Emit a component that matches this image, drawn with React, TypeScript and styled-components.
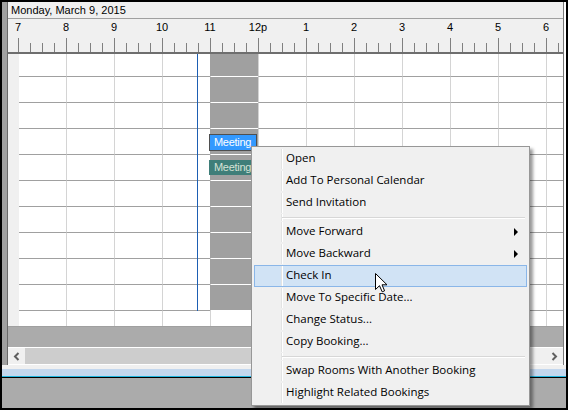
import React from "react";
import styled, { createGlobalStyle } from "styled-components";

const GlobalStyle = createGlobalStyle`
  html, body {
    margin: 0;
    padding: 0;
    background: #fff;
  }
  body {
    overflow: hidden;
  }
`;

const HOURS = ["7", "8", "9", "10", "11", "12p", "1", "2", "3", "4", "5", "6"];
const BUSY_COL = 4;
const NOW_X = 189;

interface RowSpec {
  height: number;
  meeting?: "blue" | "teal";
}

const ROWS: RowSpec[] = [
  { height: 23 },
  { height: 26 },
  { height: 26 },
  { height: 26, meeting: "blue" },
  { height: 26, meeting: "teal" },
  { height: 26 },
  { height: 26 },
  { height: 26 },
  { height: 26 },
  { height: 26 },
];

type MenuEntry = { label: string; sub?: boolean; hot?: boolean } | "sep";

const MENU: MenuEntry[] = [
  { label: "Open" },
  { label: "Add To Personal Calendar" },
  { label: "Send Invitation" },
  "sep",
  { label: "Move Forward", sub: true },
  { label: "Move Backward", sub: true },
  { label: "Check In", hot: true },
  { label: "Move To Specific Date..." },
  { label: "Change Status..." },
  { label: "Copy Booking..." },
  "sep",
  { label: "Swap Rooms With Another Booking" },
  { label: "Highlight Related Bookings" },
];

const App: React.FC = () => {
  return (
    <>
      <GlobalStyle />
      <Window>
        <Main>
          <SideStrip />
          <Content>
            <DateBar>Monday, March 9, 2015</DateBar>
            <Ruler>
              {HOURS.map((h) => (
                <HourMark key={h}>
                  <HourLabel>{h}</HourLabel>
                  <Ticks>
                    <Tick $major />
                    <Tick />
                    <Tick />
                    <Tick />
                  </Ticks>
                </HourMark>
              ))}
            </Ruler>
            <Grid>
              <RowsBody>
                {ROWS.map((row, r) => (
                  <Row key={r} $h={row.height}>
                    <RowHead />
                    <Track>
                      {HOURS.map((h, c) => (
                        <Cell key={h} $first={c === 0} $busy={c === BUSY_COL} $line>
                          {c === BUSY_COL && row.meeting && (
                            <Meeting $tone={row.meeting}>Meeting</Meeting>
                          )}
                        </Cell>
                      ))}
                    </Track>
                  </Row>
                ))}
                <NowLine style={{ left: NOW_X }} />
              </RowsBody>
              <Row $h={15}>
                <RowHead />
                <Track>
                  {HOURS.map((h, c) => (
                    <Cell key={h} $first={c === 0} />
                  ))}
                </Track>
              </Row>
            </Grid>
            <SplitGap />
            <HScroll>
              <ScrollBtn>
                <Chevron dir="left" />
              </ScrollBtn>
              <ScrollTrack>
                <Thumb />
              </ScrollTrack>
              <ScrollBtn>
                <Chevron dir="right" />
              </ScrollBtn>
            </HScroll>
          </Content>
        </Main>
        <LightBand />
        <SelBand />
        <DarkRule />
        <BottomPane />

        <Menu>
          {MENU.map((m, i) =>
            m === "sep" ? (
              <Separator key={i}>
                <Gutter />
                <SepLine />
              </Separator>
            ) : (
              <Item key={i} $hot={m.hot}>
                <Gutter />
                <ItemLabel>{m.label}</ItemLabel>
                {m.sub && <SubArrow />}
              </Item>
            )
          )}
        </Menu>
        <Cursor viewBox="0 0 13 20">
          <path
            d="M0.5 0.5 L0.5 16.5 L4.5 12.7 L7.2 18.8 L9.6 17.8 L7 11.8 L12 11.8 Z"
            fill="#fff"
            stroke="#000"
            strokeWidth="1"
            strokeLinejoin="miter"
          />
        </Cursor>
      </Window>
    </>
  );
};

const Chevron: React.FC<{ dir: "left" | "right" }> = ({ dir }) => (
  <ChevronSvg viewBox="0 0 7 9">
    <path
      d={dir === "left" ? "M5.5 1 L2 4.5 L5.5 8" : "M1.5 1 L5 4.5 L1.5 8"}
      fill="none"
      stroke="#606060"
      strokeWidth="2"
    />
  </ChevronSvg>
);

const Window = styled.div`
  position: relative;
  width: 568px;
  height: 410px;
  box-sizing: border-box;
  border: 2px solid #000;
  display: flex;
  flex-direction: column;
  font-family: "Liberation Sans", Arial, sans-serif;
  font-size: 11px;
  color: #000;
  background: #ababab;
  overflow: hidden;
`;

const Main = styled.div`
  display: flex;
  height: 363px;
  flex-shrink: 0;
  background: #fff;
`;

const SideStrip = styled.div`
  width: 5px;
  flex-shrink: 0;
  background: #a0a0a0;
  border-right: 1px solid #696969;
`;

const Content = styled.div`
  flex: 1;
  min-width: 0;
  display: flex;
  flex-direction: column;
  margin-right: 2px;
  background: #f0f0f0;
  border-right: 1px solid #7a7a7a;
  overflow: hidden;
`;

const DateBar = styled.div`
  height: 16px;
  line-height: 16px;
  padding-left: 3px;
  border-bottom: 1px solid #a0a0a0;
  white-space: nowrap;
`;

const Ruler = styled.div`
  height: 33px;
  flex-shrink: 0;
  display: flex;
  padding-left: 10px;
  border-bottom: 2px solid #6e6e6e;
  overflow: hidden;
`;

const HourMark = styled.div`
  flex: 0 0 48px;
  display: flex;
  flex-direction: column;
  justify-content: space-between;
`;

const HourLabel = styled.div`
  width: 48px;
  margin-left: -24px;
  text-align: center;
  line-height: 16px;
`;

const Ticks = styled.div`
  display: flex;
  align-items: flex-end;
  height: 14px;
`;

const Tick = styled.span<{ $major?: boolean }>`
  flex: 0 0 12px;
  box-sizing: border-box;
  height: ${({ $major }) => ($major ? 14 : 9)}px;
  border-left: 1px solid #808080;
`;

const Grid = styled.div`
  display: flex;
  flex-direction: column;
`;

const RowsBody = styled.div`
  position: relative;
`;

const Row = styled.div<{ $h: number }>`
  display: flex;
  height: ${({ $h }) => $h}px;
  overflow: hidden;
`;

const RowHead = styled.div`
  flex: 0 0 11px;
  background: #f0f0f0;
`;

const Track = styled.div`
  flex: none;
  display: grid;
  grid-template-columns: 47px repeat(11, 48px);
  background: #fff;
`;

const Cell = styled.div<{ $first?: boolean; $busy?: boolean; $line?: boolean }>`
  box-sizing: border-box;
  display: flex;
  align-items: flex-start;
  background: ${({ $busy }) => ($busy ? "#a0a0a0" : "#fff")};
  border-left: ${({ $first, $busy }) =>
    $first ? "none" : `1px solid ${$busy ? "#a0a0a0" : "#d4d4d4"}`};
  border-bottom: ${({ $line, $busy }) =>
    $line ? `1px solid ${$busy ? "#fff" : "#a0a0a0"}` : "none"};
`;

const Meeting = styled.div<{ $tone: "blue" | "teal" }>`
  flex: none;
  box-sizing: border-box;
  width: 48px;
  height: ${({ $tone }) => ($tone === "blue" ? 17 : 15)}px;
  margin: 5px 0 0 -2px;
  padding-left: 4px;
  border: 1px solid ${({ $tone }) => ($tone === "blue" ? "#4f4f4f" : "#3f7e79")};
  background: ${({ $tone }) => ($tone === "blue" ? "#3399ff" : "#3f7e79")};
  color: ${({ $tone }) => ($tone === "blue" ? "#fff" : "#d6e2d6")};
  line-height: ${({ $tone }) => ($tone === "blue" ? 15 : 13)}px;
  letter-spacing: -0.3px;
  white-space: nowrap;
  overflow: hidden;
`;

const NowLine = styled.div`
  position: absolute;
  top: 0;
  bottom: 0;
  width: 1px;
  background: #1d5fb3;
`;

const SplitGap = styled.div`
  height: 20px;
  flex-shrink: 0;
  background: #ababab;
  border-top: 1px solid #a0a0a0;
  border-bottom: 1px solid #fff;
`;

const HScroll = styled.div`
  display: flex;
  height: 16px;
  flex-shrink: 0;
  background: #f0f0f0;
  border-bottom: 1px solid #fff;
`;

const ScrollBtn = styled.div`
  flex: 0 0 17px;
  display: flex;
  align-items: center;
  justify-content: center;
`;

const ChevronSvg = styled.svg`
  width: 7px;
  height: 9px;
`;

const ScrollTrack = styled.div`
  flex: 1;
  display: flex;
`;

const Thumb = styled.div`
  width: 480px;
  background: #cdcdcd;
`;

const LightBand = styled.div`
  height: 4px;
  background: #f0f0f0;
`;

const SelBand = styled.div`
  height: 7px;
  background: #c3d7ee;
  border-bottom: 1px solid #1fb5de;
`;

const DarkRule = styled.div`
  height: 1px;
  background: #000;
`;

const BottomPane = styled.div`
  flex: 1;
  background: #ababab;
`;

const Menu = styled.div`
  position: absolute;
  left: 249px;
  top: 144px;
  width: 279px;
  box-sizing: border-box;
  padding: 1px 0;
  background: #f0f0f0;
  border: 1px solid #979797;
  box-shadow: 3px 3px 3px rgba(0, 0, 0, 0.4);
  font-family: "Open Sans", "Noto Sans", sans-serif;
  font-size: 11.5px;
  color: #000;
`;

const Item = styled.div<{ $hot?: boolean }>`
  display: flex;
  align-items: center;
  height: 22px;
  box-sizing: border-box;
  margin: 0 2px;
  border: 1px solid ${({ $hot }) => ($hot ? "#8ab6e8" : "transparent")};
  background: ${({ $hot }) => ($hot ? "#d1e3f5" : "transparent")};
`;

const Gutter = styled.span`
  flex: 0 0 26px;
  align-self: stretch;
  border-right: 1px solid #e2e3e3;
  box-shadow: 1px 0 0 #fff;
  margin-right: 4px;
`;

const ItemLabel = styled.span`
  white-space: nowrap;
  line-height: 18px;
  margin-top: -2px;
`;

const SubArrow = styled.span`
  margin-left: auto;
  margin-right: 8px;
  width: 0;
  height: 0;
  border-left: 4px solid #000;
  border-top: 4px solid transparent;
  border-bottom: 4px solid transparent;
`;

const Separator = styled.div`
  display: flex;
  height: 7px;
  margin: 0 3px;
`;

const SepLine = styled.span`
  flex: 1;
  height: 1px;
  margin: 3px 1px 0 -4px;
  background: #d7d7d7;
  box-shadow: 0 1px 0 #fff;
`;

const Cursor = styled.svg`
  position: absolute;
  left: 373px;
  top: 271px;
  width: 13px;
  height: 20px;
`;

export default App;
